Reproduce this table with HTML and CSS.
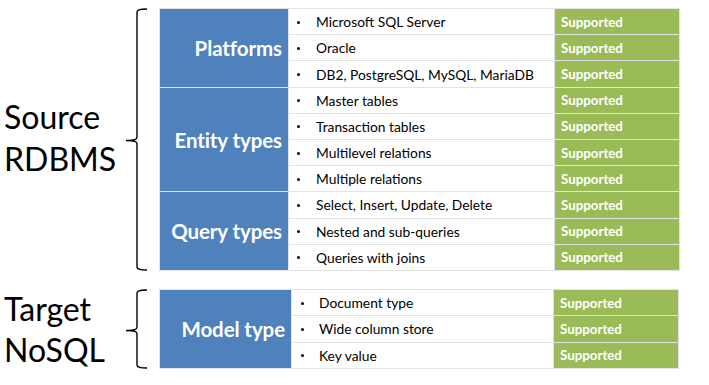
FILE: index.html
```html
<!DOCTYPE html>
<html>
<head>
<meta charset="utf-8">
<link rel="stylesheet" href="styles.css">
</head>
<body>
<div class="page">
  <section class="group group-source">
    <div class="side">Source<br>RDBMS</div>
    <svg class="brace" viewBox="0 0 24 263" preserveAspectRatio="none" width="24" height="263">
      <path d="M22 1 C15 1 12 1.5 12 4 L12 129 C12 131.5 10 132.5 1 132.5 C10 132.5 12 133.5 12 136 L12 259 C12 261.5 15 262 22 262" fill="none" stroke="#000" stroke-width="1.4"/>
    </svg>
    <div class="table table-source">
      <div class="cat" style="grid-row: span 3">Platforms</div>
      <div class="item">Microsoft SQL Server</div><div class="ok">Supported</div>
      <div class="item">Oracle</div><div class="ok">Supported</div>
      <div class="item">DB2, PostgreSQL, MySQL, MariaDB</div><div class="ok">Supported</div>
      <div class="cat" style="grid-row: span 4">Entity types</div>
      <div class="item">Master tables</div><div class="ok">Supported</div>
      <div class="item">Transaction tables</div><div class="ok">Supported</div>
      <div class="item">Multilevel relations</div><div class="ok">Supported</div>
      <div class="item">Multiple relations</div><div class="ok">Supported</div>
      <div class="cat" style="grid-row: span 3">Query types</div>
      <div class="item">Select, Insert, Update, Delete</div><div class="ok">Supported</div>
      <div class="item">Nested and sub-queries</div><div class="ok">Supported</div>
      <div class="item">Queries with joins</div><div class="ok">Supported</div>
    </div>
  </section>
  <section class="group group-target">
    <div class="side">Target<br>NoSQL</div>
    <svg class="brace" viewBox="0 0 24 80" preserveAspectRatio="none" width="24" height="80">
      <path d="M22 1 C15 1 12 1.5 12 4 L12 38 C12 40.5 10 41.5 1 41.5 C10 41.5 12 42.5 12 45 L12 76 C12 78.5 15 79 22 79" fill="none" stroke="#000" stroke-width="1.4"/>
    </svg>
    <div class="table table-target">
      <div class="cat" style="grid-row: span 3">Model type</div>
      <div class="item">Document type</div><div class="ok">Supported</div>
      <div class="item">Wide column store</div><div class="ok">Supported</div>
      <div class="item">Key value</div><div class="ok">Supported</div>
    </div>
  </section>
</div>
</body>
</html>
```
FILE: styles.css
```css
html, body {
  margin: 0;
  padding: 0;
  background: #ffffff;
}
body {
  font-family: Lato, "Open Sans", "Liberation Sans", sans-serif;
  color: #000;
}
.page {
  display: flex;
  flex-direction: column;
  gap: 18px;
  padding-top: 8px;
}
.group {
  display: flex;
  align-items: center;
}
.side {
  width: 121px;
  padding-left: 4px;
  font-size: 32px;
  line-height: 42px;
  font-weight: 400;
  margin: -4px 0 0;
}
.group-target .side {
  margin: -6px 0 -6px;
  line-height: 41px;
}
.brace {
  display: block;
  align-self: stretch;
  height: auto;
  width: 24px;
  margin-right: 10px;
}
.table {
  display: grid;
  background: #e3e3e3;
  gap: 1px;
  padding: 1px;
}
.table-source {
  grid-template-columns: 128px 265px 124px;
  grid-auto-rows: 25.2px;
}
.table-target {
  grid-template-columns: 131px 261px 124px;
  grid-auto-rows: 25.3px;
}
.cat {
  background: #4f81bd;
  color: #fff;
  font-weight: 700;
  font-size: 20.5px;
  display: flex;
  align-items: center;
  justify-content: flex-end;
  padding-right: 6px;
  letter-spacing: -0.1px;
}
.item {
  background: #fff;
  font-size: 13.8px;
  display: flex;
  align-items: center;
  padding-left: 27px;
  position: relative;
}
.item::before {
  content: "";
  position: absolute;
  left: 8px;
  top: 50%;
  width: 3px;
  height: 3px;
  margin-top: -1px;
  background: #000;
  border-radius: 50%;
}
.table-target .item {
  padding-left: 27px;
}
.table-target .item::before {
  left: 9px;
}
.ok {
  background: #9bbb59;
  color: #fff;
  font-weight: 700;
  font-size: 13.3px;
  display: flex;
  align-items: center;
  padding-left: 6px;
}
```
